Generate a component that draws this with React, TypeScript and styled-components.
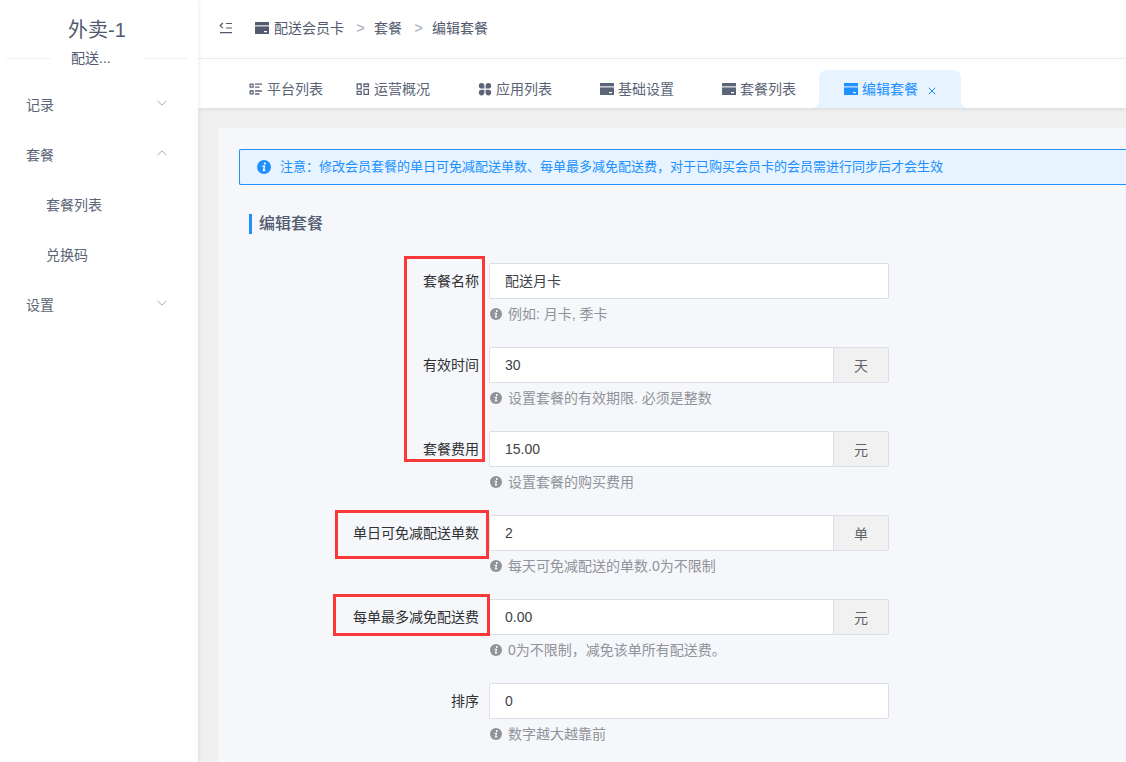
import React from 'react';
import styled, { createGlobalStyle, css } from 'styled-components';

const color = {
  primary: '#2090ff',
  primaryLight: '#e7f3ff',
  text: '#515a6e',
  menu: '#5c6577',
  label: '#303133',
  input: '#404246',
  hint: '#909399',
  line: '#dcdfe6',
  page: '#f0f0f0',
  panel: '#f5f7fb',
  mark: '#fb3838',
};

const GlobalStyle = createGlobalStyle`
  *, *::before, *::after { box-sizing: border-box; }
  body {
    margin: 0;
    background: ${color.page};
    color: ${color.text};
    font: 14px/20px "Liberation Sans", "Noto Sans CJK SC", sans-serif;
    overflow: hidden;
  }
  button, input { font: inherit; color: inherit; }
  a { color: inherit; text-decoration: none; }
`;

const Layout = styled.div`
  display: flex;
  height: 100vh;
`;

/* Sidebar */

const Sidebar = styled.aside`
  position: relative;
  z-index: 2;
  flex: 0 0 198px;
  background: #fff;
  box-shadow: 1px 0 4px rgba(0, 21, 41, 0.08);
`;

const Brand = styled.header`
  display: flex;
  flex-direction: column;
  padding: 18px 10px 0 6px;
  text-align: center;
`;

const BrandName = styled.h1`
  margin: 0;
  font-size: 20px;
  font-weight: 400;
  line-height: 24px;
`;

const BrandSection = styled.div`
  display: flex;
  align-items: center;
  margin-top: 6px;

  &::before, &::after {
    content: '';
    flex: 1;
    height: 1px;
    background: #f1f1f3;
  }
`;

const BrandSectionName = styled.span`
  width: 92px;
  padding: 0 20px;
  text-align: left;
`;

const Menu = styled.nav`
  display: flex;
  flex-direction: column;
  padding-top: 12px;
  color: ${color.menu};
`;

const MenuGroup = styled.button`
  display: flex;
  align-items: center;
  justify-content: space-between;
  height: 50px;
  padding: 0 31px 0 26px;
  border: 0;
  background: none;
  text-align: left;

  svg { margin-bottom: 4px; color: #a6a9b0; }
`;

const MenuLink = styled.a`
  height: 50px;
  padding-left: 46px;
  line-height: 50px;
`;

/* Header */

const Main = styled.main`
  display: flex;
  flex: 1;
  flex-direction: column;
  min-width: 0;
`;

const TopBar = styled.div`
  display: flex;
  align-items: center;
  height: 59px;
  padding: 0 21px 3px;
  border-bottom: 1px solid #f3f3f5;
  background: #fff;
`;

const FoldButton = styled.button`
  display: flex;
  margin-right: 22px;
  padding: 0;
  border: 0;
  background: none;
`;

const Breadcrumb = styled.nav`
  display: flex;
  align-items: center;
`;

const Crumb = styled.a`
  display: flex;
  align-items: center;
  gap: 5px;
`;

const Separator = styled.span`
  width: 30px;
  padding-left: 3px;
  color: #b6bcc6;
  font-weight: 700;
  text-align: center;
`;

const Tabs = styled.nav`
  display: flex;
  align-items: flex-end;
  height: 49px;
  padding-left: 26px;
  background: #fff;
  box-shadow: 0 1px 4px rgba(0, 21, 41, 0.1);
  color: ${color.menu};
  z-index: 1;
`;

const Tab = styled.div<{ $active?: boolean; $pinned?: boolean }>`
  position: relative;
  display: flex;
  flex: none;
  align-items: center;
  height: 38px;
  padding: 0 ${(p) => (p.$pinned ? 8 : 23)}px 0 25px;

  ${(p) =>
    p.$active &&
    css`
      padding-right: 25px;
      border-radius: 8px 8px 0 0;
      background: ${color.primaryLight};
      color: ${color.primary};

      &::before, &::after {
        content: '';
        position: absolute;
        bottom: 0;
        width: 6px;
        height: 6px;
      }
      &::before {
        right: 100%;
        background: radial-gradient(circle at 0 0, transparent 5px, ${color.primaryLight} 6px);
      }
      &::after {
        left: 100%;
        background: radial-gradient(circle at 100% 0, transparent 5px, ${color.primaryLight} 6px);
      }
    `}
`;

const TabLink = styled.a`
  display: flex;
  align-items: center;
  gap: 4px;
`;

const CloseButton = styled.button`
  display: flex;
  margin: 3px 0 0 10px;
  padding: 0;
  border: 0;
  background: none;
`;

/* Content */

const Panel = styled.section`
  flex: 1;
  min-height: 0;
  margin: 20px 0 0 20px;
  padding: 21px 0 0 21px;
  background: ${color.panel};
`;

const Notice = styled.div`
  display: flex;
  align-items: center;
  gap: 9px;
  height: 36px;
  padding-left: 17px;
  border: solid ${color.primary};
  border-width: 1px 0 1px 1px;
  border-radius: 2px 0 0 2px;
  background: ${color.primaryLight};
  color: ${color.primary};
  font-size: 13px;
`;

const SectionTitle = styled.h2`
  margin: 29px 0 0 10px;
  padding-left: 7px;
  border-left: 3px solid ${color.primary};
  font-size: 16px;
  font-weight: 500;
  line-height: 20px;
`;

const Form = styled.form`
  position: relative;
  padding-top: 29px;
`;

const Row = styled.div`
  display: grid;
  grid-template-columns: 240px minmax(0, 400px);
  column-gap: 10px;
  height: 84px;
`;

const Label = styled.label`
  color: ${color.label};
  line-height: 36px;
  text-align: right;
`;

const InputGroup = styled.div`
  display: flex;
  height: 36px;
  border: 1px solid ${color.line};
  border-radius: 2px;
  background: #fff;
  overflow: hidden;
`;

const TextInput = styled.input`
  flex: 1;
  min-width: 0;
  padding: 0 15px;
  border: 0;
  outline: 0;
  background: none;
  color: ${color.input};
`;

const Unit = styled.span`
  flex: 0 0 55px;
  border-left: 1px solid ${color.line};
  background: #f1f1f1;
  color: #606266;
  line-height: 36px;
  text-align: center;
`;

const Hint = styled.p`
  display: flex;
  align-items: center;
  gap: 6px;
  margin: 5px 0 0 1px;
  color: ${color.hint};
`;

const Mark = styled.div<{ $x: number; $y: number; $w: number; $h: number }>`
  position: absolute;
  left: ${(p) => p.$x}px;
  top: ${(p) => p.$y}px;
  width: ${(p) => p.$w}px;
  height: ${(p) => p.$h}px;
  border: 3px solid ${color.mark};
  pointer-events: none;
`;

/* Icons */

const Chevron = ({ up }: { up?: boolean }) => (
  <svg width="10" height="6" viewBox="0 0 10 6" fill="none" stroke="currentColor">
    <path d={up ? 'M.5 5.2 5 .8l4.5 4.4' : 'M.5.8 5 5.2 9.5.8'} />
  </svg>
);

const FoldIcon = () => (
  <svg width="14" height="14" viewBox="0 0 14 14" fill="none" stroke="currentColor" strokeWidth="1.2">
    <path d="M7 2.5h6M7 7h6M1 11.6h12M3.8 2 1.2 4.6l2.6 2.6" />
  </svg>
);

const CardIcon = () => (
  <svg width="14" height="14" viewBox="0 0 14 14" fill="currentColor">
    <path d="M.5 1h13a.5.5 0 0 1 .5.5V4H0V1.5A.5.5 0 0 1 .5 1Z" />
    <path d="M0 5.5h14v7a.5.5 0 0 1-.5.5H.5a.5.5 0 0 1-.5-.5v-7Zm9 4.5v1.2h3V10H9Z" fillRule="evenodd" />
    <path d="M0 4h14v1.5H0Z" opacity=".35" />
  </svg>
);

const ListIcon = () => (
  <svg width="14" height="14" viewBox="0 0 14 14" fill="none" stroke="currentColor" strokeWidth="1.3">
    <path d="M1.2 2.2h2.9v2.9H1.2ZM1.2 9h2.9v2.9H1.2ZM6 2.2h7M6 5.2h4.5M6 9h7M6 12h4.5" />
  </svg>
);

const DashboardIcon = () => (
  <svg width="14" height="14" viewBox="0 0 14 14" fill="none" stroke="currentColor" strokeWidth="1.3">
    <path d="M1.2 2h4v4.8h-4ZM1.2 9.4h4v3h-4ZM8 2h4.4v2.6H8ZM8 7.4h4.4v5H8Z" />
  </svg>
);

const AppsIcon = () => (
  <svg width="14" height="14" viewBox="0 0 14 14" fill="currentColor">
    <path d="M3.6 1a2.8 2.8 0 0 1 2.8 2.8v2.8H3.6a2.8 2.8 0 0 1 0-5.6ZM10.4 1a2.8 2.8 0 0 1 0 5.6H7.6V3.8A2.8 2.8 0 0 1 10.4 1ZM3.6 7.8h2.8v2.8a2.8 2.8 0 1 1-2.8-2.8ZM7.6 7.8h2.8a2.8 2.8 0 1 1-2.8 2.8V7.8Z" />
  </svg>
);

const CloseIcon = () => (
  <svg width="8" height="8" viewBox="0 0 8 8" fill="none" stroke="currentColor">
    <path d="m.8.8 6.4 6.4M7.2.8.8 7.2" />
  </svg>
);

const InfoIcon = ({ size }: { size: number }) => (
  <svg width={size} height={size} viewBox="0 0 14 14">
    <circle cx="7" cy="7" r="7" fill="currentColor" />
    <circle cx="7.9" cy="3.5" r="1.1" fill="#fff" />
    <path d="M5.3 6.1h2.2L6.5 10.3q-.1.6.7.2l1-.6" fill="none" stroke="#fff" strokeWidth="1.3" />
  </svg>
);

/* Data */

const tabs = [
  { name: '平台列表', icon: <ListIcon />, pinned: true },
  { name: '运营概况', icon: <DashboardIcon /> },
  { name: '应用列表', icon: <AppsIcon /> },
  { name: '基础设置', icon: <CardIcon /> },
  { name: '套餐列表', icon: <CardIcon /> },
  { name: '编辑套餐', icon: <CardIcon />, active: true },
];

const fields = [
  { id: 'name', label: '套餐名称', value: '配送月卡', hint: '例如: 月卡, 季卡' },
  { id: 'days', label: '有效时间', value: '30', unit: '天', hint: '设置套餐的有效期限. 必须是整数' },
  { id: 'price', label: '套餐费用', value: '15.00', unit: '元', hint: '设置套餐的购买费用' },
  { id: 'orders', label: '单日可免减配送单数', value: '2', unit: '单', hint: '每天可免减配送的单数.0为不限制' },
  { id: 'discount', label: '每单最多减免配送费', value: '0.00', unit: '元', hint: '0为不限制，减免该单所有配送费。' },
  { id: 'sort', label: '排序', value: '0', hint: '数字越大越靠前' },
];

export default function App() {
  return (
    <>
      <GlobalStyle />
      <Layout>
        <Sidebar>
          <Brand>
            <BrandName>外卖-1</BrandName>
            <BrandSection>
              <BrandSectionName>配送...</BrandSectionName>
            </BrandSection>
          </Brand>
          <Menu>
            <MenuGroup type="button">记录<Chevron /></MenuGroup>
            <MenuGroup type="button" aria-expanded="true">套餐<Chevron up /></MenuGroup>
            <MenuLink href="#packages">套餐列表</MenuLink>
            <MenuLink href="#codes">兑换码</MenuLink>
            <MenuGroup type="button">设置<Chevron /></MenuGroup>
          </Menu>
        </Sidebar>
        <Main>
          <TopBar>
            <FoldButton type="button" aria-label="收起菜单"><FoldIcon /></FoldButton>
            <Breadcrumb>
              <Crumb href="#card"><CardIcon />配送会员卡</Crumb>
              <Separator>&gt;</Separator>
              <Crumb href="#packages">套餐</Crumb>
              <Separator>&gt;</Separator>
              <Crumb href="#edit">编辑套餐</Crumb>
            </Breadcrumb>
          </TopBar>
          <Tabs>
            {tabs.map((tab) => (
              <Tab key={tab.name} $active={tab.active} $pinned={tab.pinned}>
                <TabLink href="#tab">{tab.icon}{tab.name}</TabLink>
                {tab.active && (
                  <CloseButton type="button" aria-label="关闭"><CloseIcon /></CloseButton>
                )}
              </Tab>
            ))}
          </Tabs>
          <Panel>
            <Notice role="alert">
              <InfoIcon size={14} />
              注意：修改会员套餐的单日可免减配送单数、每单最多减免配送费，对于已购买会员卡的会员需进行同步后才会生效
            </Notice>
            <SectionTitle>编辑套餐</SectionTitle>
            <Form>
              {fields.map((field) => (
                <Row key={field.id}>
                  <Label htmlFor={field.id}>{field.label}</Label>
                  <div>
                    <InputGroup>
                      <TextInput id={field.id} defaultValue={field.value} />
                      {field.unit && <Unit>{field.unit}</Unit>}
                    </InputGroup>
                    <Hint><InfoIcon size={12} />{field.hint}</Hint>
                  </div>
                </Row>
              ))}
              <Mark $x={165} $y={22} $w={81} $h={206} />
              <Mark $x={96} $y={276} $w={154} $h={49} />
              <Mark $x={94} $y={360} $w={157} $h={42} />
            </Form>
          </Panel>
        </Main>
      </Layout>
    </>
  );
}
